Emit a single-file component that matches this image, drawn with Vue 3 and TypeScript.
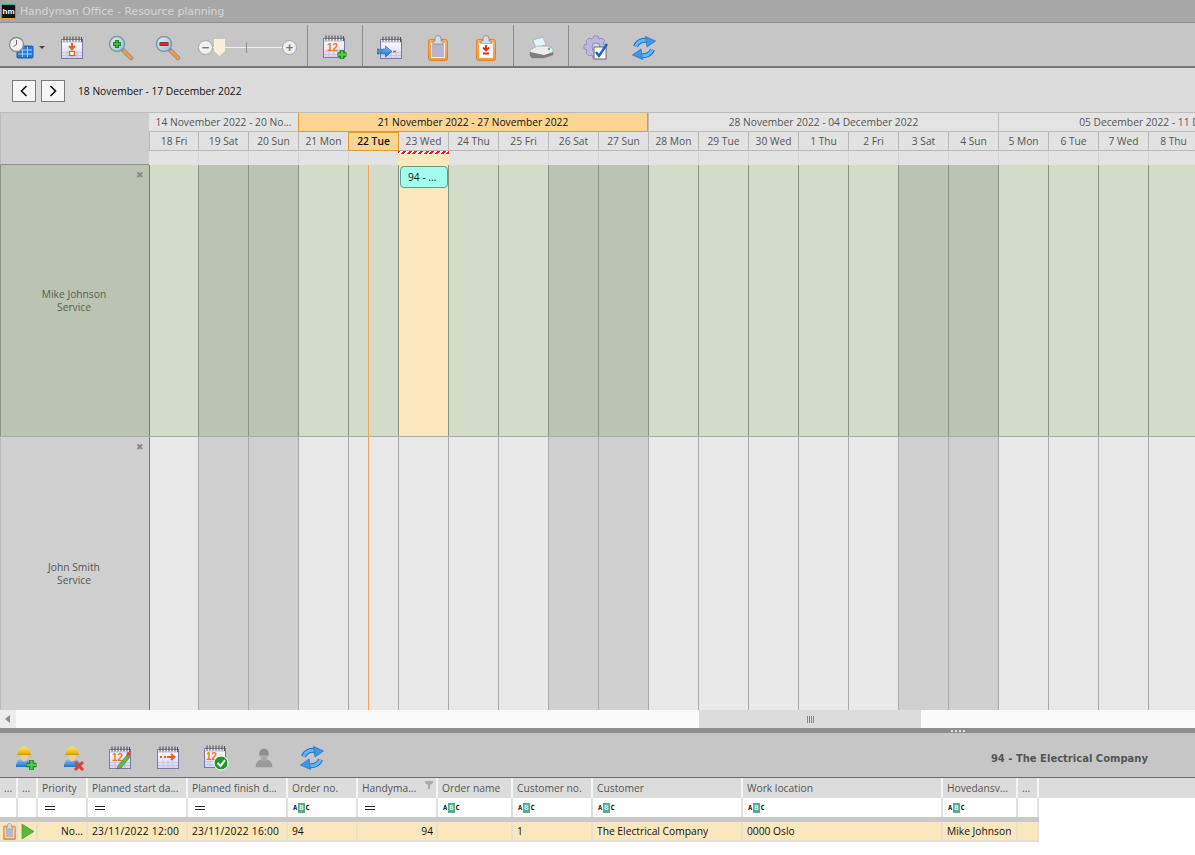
<script setup lang="ts">
interface Day { label: string; weekend: boolean; today?: boolean; active?: boolean }
interface Column { title: string; width: number; filter: '' | 'eq' | 'abc'; value: string; right?: boolean; sort?: boolean; date?: boolean }

const weeks = [
  { label: '14 November 2022 - 20 No...', days: 3 },
  { label: '21 November 2022 - 27 November 2022', days: 7, selected: true },
  { label: '28 November 2022 - 04 December 2022', days: 7 },
  { label: '05 December 2022 - 11 December 2022', days: 7 }
]

const names = ['Mon', 'Tue', 'Wed', 'Thu', 'Fri', 'Sat', 'Sun']
const days: Day[] = []
const addDays = (from: number, to: number, startIdx: number) => {
  for (let d = from; d <= to; d++) {
    const idx = (startIdx + d - from) % 7
    days.push({
      label: `${d} ${names[idx]}`,
      weekend: idx > 4,
      today: d === 22,
      active: d === 23
    })
  }
}
addDays(18, 30, 4)
addDays(1, 8, 3)

const resources = [
  { name: 'Mike Johnson', team: 'Service', green: true },
  { name: 'John Smith', team: 'Service', green: false }
]

const columns: Column[] = [
  { title: '...', width: 18, filter: '', value: '' },
  { title: '...', width: 20, filter: '', value: '' },
  { title: 'Priority', width: 50, filter: 'eq', value: 'No...', right: true },
  { title: 'Planned start da...', width: 100, filter: 'eq', value: '23/11/2022 12:00', date: true },
  { title: 'Planned finish d...', width: 100, filter: 'eq', value: '23/11/2022 16:00', date: true },
  { title: 'Order no.', width: 70, filter: 'abc', value: '94' },
  { title: 'Handyma...', width: 80, filter: 'eq', value: '94', right: true, sort: true },
  { title: 'Order name', width: 75, filter: 'abc', value: '' },
  { title: 'Customer no.', width: 80, filter: 'abc', value: '1' },
  { title: 'Customer', width: 150, filter: 'abc', value: 'The Electrical Company' },
  { title: 'Work location', width: 200, filter: 'abc', value: '0000 Oslo' },
  { title: 'Hovedansv...', width: 75, filter: 'abc', value: 'Mike Johnson' },
  { title: '...', width: 21, filter: '', value: '' }
]
</script>

<template>
  <div class="app">
    <svg width="0" height="0" class="defs">
      <defs>
        <linearGradient id="page" x1="0" y1="0" x2="0" y2="1">
          <stop offset="0" stop-color="#ffffff" />
          <stop offset="1" stop-color="#d4d4f2" />
        </linearGradient>
        <linearGradient id="blue" x1="0" y1="0" x2="0" y2="1">
          <stop offset="0" stop-color="#7cc4f5" />
          <stop offset="1" stop-color="#1f6fd0" />
        </linearGradient>
        <linearGradient id="lens" x1="0" y1="0" x2="1" y2="1">
          <stop offset="0" stop-color="#e4f0f6" />
          <stop offset="1" stop-color="#98bdd0" />
        </linearGradient>
        <linearGradient id="orange" x1="0" y1="0" x2="0" y2="1">
          <stop offset="0" stop-color="#f6b266" />
          <stop offset="1" stop-color="#ef9a3a" />
        </linearGradient>
        <linearGradient id="hat" x1="0" y1="0" x2="0" y2="1">
          <stop offset="0" stop-color="#ffe25a" />
          <stop offset="1" stop-color="#eeb100" />
        </linearGradient>
        <symbol id="cal" viewBox="0 0 24 24">
          <rect x="1.500" y="3.500" width="21" height="19" fill="url(#page)" stroke="#7a7aa8" />
          <path d="M2 6h20" stroke="#b8b8d8" />
          <path d="M2 16.500h20M2 19.500h20M7 14v8M12 14v8M17 14v8" stroke="#c0c0e2" stroke-width=".8" />
          <path d="M4 .5v5M7 .5v5M10 .5v5M13 .5v5M16 .5v5M19 .5v5M21.500 1v5" stroke="#555" stroke-width="1.100" />
        </symbol>
        <symbol id="mag" viewBox="0 0 26 26">
          <path d="M14 14l9 9" stroke="#8a8a8a" stroke-width="4.500" stroke-linecap="round" />
          <path d="M16 16l7 7" stroke="#f09a45" stroke-width="3" stroke-linecap="round" />
          <circle cx="9" cy="9" r="7.500" fill="url(#lens)" stroke="#7f98a6" stroke-width="1.500" />
        </symbol>
        <symbol id="clip" viewBox="0 0 20 26">
          <rect x=".5" y="4.500" width="19" height="21" rx="2" fill="url(#orange)" stroke="#e08426" />
          <rect x="3.500" y="8.500" width="13" height="14" fill="#b6b6ca" stroke="#eeeef4" />
          <path d="M7 6V3.500a3 3 0 0 1 6 0V6h2v3H5V6z" fill="#dcdcdc" stroke="#858585" stroke-width=".8" />
        </symbol>
        <symbol id="worker" viewBox="0 0 24 24">
          <path d="M1 23c0-6 3-8.500 6-8.500h6c3 0 6 2.500 6 8.500z" fill="url(#blue)" />
          <path d="M6.500 9h7v4a3.500 3.500 0 0 1-7 0z" fill="#f5c896" />
          <path d="M3.500 8.500c0-5 2.500-8 6.500-8s6.500 3 6.500 8z" fill="url(#hat)" />
          <path d="M2.500 9h15" stroke="#d39800" stroke-width="1.500" />
        </symbol>
        <symbol id="sync" viewBox="0 0 24 24">
          <path d="M3.500 10.500C5 6 10 3.500 15 4.500M20.500 13.500C19 18 14 20.500 9 19.500" fill="none" stroke="#1f6fd0" stroke-width="5" />
          <path d="M3.500 10.500C5 6 10 3.500 15 4.500M20.500 13.500C19 18 14 20.500 9 19.500" fill="none" stroke="#62b8f2" stroke-width="3" />
          <path d="M13.500 .5L23.500 5 15 11z" fill="#3d97e6" stroke="#1f6fd0" stroke-width=".7" />
          <path d="M10.500 23.500L.5 19 9 13z" fill="#3d97e6" stroke="#1f6fd0" stroke-width=".7" />
        </symbol>
      </defs>
    </svg>

    <header class="titlebar">
      <span class="logo">hm</span>
      <span class="title">Handyman Office - Resource planning</span>
    </header>

    <div class="toolbar">
      <div class="group first">
        <button class="tool clock">
          <svg width="28" height="24" viewBox="0 0 28 24">
            <rect x="9" y="10" width="16" height="12" rx="1" fill="#2a78d8" stroke="#1c5bb0" />
            <path d="M10 14h14M10 18h14M14.500 11v10M19.500 11v10" stroke="#9fd0fa" />
            <circle cx="8.500" cy="8.500" r="7" fill="#f0f0f0" stroke="#8a8a8a" stroke-width="1.300" />
            <path d="M8.500 4v4.500l-3 2" fill="none" stroke="#666" />
          </svg>
          <i class="caret"></i>
        </button>
        <button class="tool w48">
          <svg width="24" height="24">
            <use href="#cal" />
            <path d="M12 7v5M9 10l3 3 3-3" fill="none" stroke="#f15a22" stroke-width="2" />
            <rect x="9.500" y="15.500" width="5" height="4" fill="#fff" stroke="#f15a22" stroke-width="1.300" />
          </svg>
        </button>
        <button class="tool w49">
          <svg width="26" height="26">
            <use href="#mag" />
            <path d="M5 9h8M9 5v8" stroke="#0a5c10" stroke-width="3.600" />
            <path d="M5.500 9h7M9 5.500v7" stroke="#3cc040" stroke-width="1.800" />
          </svg>
        </button>
        <button class="tool w45">
          <svg width="26" height="26">
            <use href="#mag" />
            <path d="M4.500 9h9" stroke="#7a0c06" stroke-width="3.600" />
            <path d="M5 9h8" stroke="#d92a20" stroke-width="2" />
          </svg>
        </button>
        <div class="slider">
          <span class="round">−</span>
          <div class="track"><i class="tick"></i><i class="thumb"></i></div>
          <span class="round">+</span>
        </div>
      </div>
      <div class="group g54">
        <button class="tool w54">
          <svg width="26" height="26" viewBox="0 0 26 26">
            <use href="#cal" width="24" height="24" />
            <text x="5" y="16" class="cal-num">12</text>
            <path d="M20 15v9M15.500 19.500h9" stroke="#0a7a14" stroke-width="4.500" />
            <path d="M20 15.500v8M16 19.500h8" stroke="#50d040" stroke-width="2.500" />
          </svg>
        </button>
      </div>
      <div class="group g150">
        <button class="tool w48">
          <svg width="26" height="24" viewBox="0 0 26 24">
            <use href="#cal" x="2" width="24" height="24" />
            <path d="M0 13h2v5H0zM3 13h1.500v5H3zM5.500 13h3V10l6.500 5.500L8.500 21v-3h-3z" fill="url(#blue)" stroke="#1c5bb0" stroke-width=".6" />
            <path d="M16 15.500h3" stroke="#f15a22" stroke-width="1.500" />
          </svg>
        </button>
        <button class="tool w48">
          <svg width="20" height="26"><use href="#clip" /></svg>
        </button>
        <button class="tool w48">
          <svg width="20" height="26">
            <use href="#clip" />
            <rect x="4" y="9" width="12" height="13" fill="#fff" />
            <path d="M10 10v5M7 12.500l3 3 3-3" fill="none" stroke="#e02a18" stroke-width="1.800" />
            <path d="M7 18.500h6" stroke="#e02a18" stroke-width="2" />
          </svg>
        </button>
      </div>
      <div class="group g54">
        <button class="tool w54">
          <svg width="26" height="24" viewBox="0 0 26 24">
            <path d="M5 4l10-3 3 8-10 3z" fill="#e4f4fc" stroke="#8fb2c6" stroke-width=".7" />
            <path d="M2 14l7-4h11l5 3v6l-9 3H4l-2-2z" fill="#ececec" stroke="#a0a0a0" stroke-width=".7" />
            <path d="M2 16l14 3 9-3v3l-9 3H4l-2-2z" fill="#7d7d7d" />
            <circle cx="21" cy="13" r="1.200" fill="#58c060" />
          </svg>
        </button>
      </div>
      <div class="group last">
        <button class="tool w48">
          <svg width="26" height="26" viewBox="0 0 26 26">
            <path d="M11 1h4l1 3 3-1 3 3-2 3 3 1v4l-3 1 1 3-3 3-3-1-1 3h-4l-1-3-3 1-3-3 1-3-3-1v-4l3-1-1-3 3-3 3 1z" fill="#b9b9dc" stroke="#8787b0" stroke-width=".8" />
            <circle cx="13" cy="12" r="4" fill="#d8d8ee" stroke="#8787b0" />
            <rect x="11" y="12" width="12" height="12" fill="#fff" stroke="#667" />
            <path d="M13 17l3 4 8-12" fill="none" stroke="#1c60c8" stroke-width="2.400" />
          </svg>
        </button>
        <button class="tool w48">
          <svg width="24" height="24"><use href="#sync" /></svg>
        </button>
      </div>
    </div>

    <nav class="datebar">
      <button class="nav">
        <svg width="8" height="12" viewBox="0 0 8 12"><path d="M6.500 1l-5 5 5 5" fill="none" stroke="#111" stroke-width="1.600" /></svg>
      </button>
      <button class="nav">
        <svg width="8" height="12" viewBox="0 0 8 12"><path d="M1.500 1l5 5-5 5" fill="none" stroke="#111" stroke-width="1.600" /></svg>
      </button>
      <span class="range">18 November - 17 December 2022</span>
    </nav>

    <section class="scheduler">
      <div class="sch-head">
        <div class="corner"></div>
        <div class="timeline-head">
          <div class="weeks">
            <div
              v-for="w in weeks"
              :key="w.label"
              class="week"
              :class="{ selected: w.selected }"
              :style="{ width: w.days * 50 + 'px' }"
            >{{ w.label }}</div>
          </div>
          <div class="day-row">
            <div v-for="d in days" :key="d.label" class="day" :class="{ today: d.today }">{{ d.label }}</div>
          </div>
          <div class="blank-row">
            <div v-for="d in days" :key="d.label" class="blank" :class="{ hatch: d.active }"></div>
          </div>
        </div>
      </div>

      <div class="sch-body">
        <div v-for="r in resources" :key="r.name" class="res" :class="{ green: r.green }">
          <div class="res-label">
            <span class="close">✖</span>
            <span>{{ r.name }}</span>
            <span>{{ r.team }}</span>
          </div>
          <div class="cells">
            <div
              v-for="d in days"
              :key="d.label"
              class="cell"
              :class="{ weekend: d.weekend, active: d.active && r.green }"
            >
              <div v-if="d.active && r.green" class="event">94 - ...</div>
            </div>
          </div>
        </div>
        <i class="now"></i>
      </div>
    </section>

    <div class="hscroll">
      <span class="arrow"></span>
      <div class="thumbbar"><i class="grip"></i></div>
    </div>
    <div class="splitter"><i></i><i></i><i></i><i></i></div>

    <div class="toolbar2">
      <button class="tool w48">
        <svg width="28" height="28" viewBox="0 0 28 28">
          <use href="#worker" x="5" y="2" width="22" height="22" />
          <path d="M21.500 16v10M16.500 21h10" stroke="#0a7a14" stroke-width="4.500" />
          <path d="M21.500 16.500v9M17 21h9" stroke="#50d040" stroke-width="2.500" />
        </svg>
      </button>
      <button class="tool w48">
        <svg width="28" height="28" viewBox="0 0 28 28">
          <use href="#worker" x="5" y="2" width="22" height="22" />
          <path d="M17 18l8 8M25 18l-8 8" stroke="#e0402a" stroke-width="3" />
        </svg>
      </button>
      <button class="tool w48">
        <svg width="24" height="24">
          <use href="#cal" />
          <text x="4" y="15" class="cal-num">12</text>
          <path d="M10 20l9-11 3 2-9 11-4 1z" fill="#66b84a" stroke="#2f7a20" stroke-width=".6" />
          <circle cx="20.500" cy="8" r="2" fill="#e0402a" />
        </svg>
      </button>
      <button class="tool w48">
        <svg width="24" height="24">
          <use href="#cal" />
          <path d="M4 11h2M8 11h2" stroke="#f15a22" stroke-width="2" />
          <path d="M11 11h7M15 8l3.500 3-3.500 3" fill="none" stroke="#f15a22" stroke-width="2" />
        </svg>
      </button>
      <button class="tool w48">
        <svg width="26" height="26" viewBox="0 0 26 26">
          <use href="#cal" width="24" height="24" />
          <text x="3" y="15" class="cal-num">12</text>
          <circle cx="18" cy="18" r="7" fill="#1f9a2a" stroke="#fff" />
          <path d="M14.500 18l3 3 4.500-6" fill="none" stroke="#fff" stroke-width="2" />
        </svg>
      </button>
      <button class="tool w48">
        <svg width="20" height="24" viewBox="0 0 24 24">
          <path d="M2 23c0-7 4-9 7-9h6c3 0 7 2 7 9z" fill="#9a9a9a" />
          <path d="M8 9h8v4a4 4 0 0 1-8 0z" fill="#a8a8a8" />
          <path d="M6 9c0-5 2.500-8 6-8s6 3 6 8z" fill="#8e8e8e" />
        </svg>
      </button>
      <button class="tool w48">
        <svg width="24" height="24"><use href="#sync" /></svg>
      </button>
      <strong class="order-title">94 - The Electrical Company</strong>
    </div>

    <section class="grid">
      <div class="g-row g-header">
        <div v-for="(c, i) in columns" :key="i" class="g-cell" :style="{ width: c.width + 'px' }">
          <span class="clip">{{ c.title }}</span>
          <svg v-if="c.sort" class="funnel" width="8" height="8" viewBox="0 0 8 8"><path d="M0 0h8v2L5 4v4H3V4L0 2z" fill="#aaa" /></svg>
        </div>
      </div>
      <div class="g-row g-filter">
        <div v-for="(c, i) in columns" :key="i" class="g-cell" :style="{ width: c.width + 'px' }">
          <i v-if="c.filter === 'eq'" class="eq"></i>
          <span v-else-if="c.filter === 'abc'" class="abc">A<b>B</b>C</span>
        </div>
      </div>
      <div class="g-strip"></div>
      <div class="g-row g-data">
        <div
          v-for="(c, i) in columns"
          :key="i"
          class="g-cell"
          :class="{ right: c.right, date: c.date }"
          :style="{ width: c.width + 'px' }"
        >
          <svg v-if="i === 0" width="13" height="17" viewBox="0 0 20 26"><use href="#clip" /></svg>
          <svg v-else-if="i === 1" width="13" height="15" viewBox="0 0 13 15"><path d="M1 0l12 7.500L1 15z" fill="#5cb83c" stroke="#3d9628" stroke-width=".6" /></svg>
          <span v-else class="clip">{{ c.value }}</span>
        </div>
      </div>
    </section>
  </div>
</template>

<style>
html, body { margin: 0; padding: 0; background: #fff; }
</style>

<style scoped>
.app {
  width: 1195px;
  height: 855px;
  overflow: hidden;
  display: flex;
  flex-direction: column;
  font-family: "Open Sans", "Liberation Sans", sans-serif;
  font-size: 10.25px;
  color: #111;
  background: #fff;
}
.defs { position: absolute; }
button { margin: 0; padding: 0; border: 0; background: none; font: inherit; }

.titlebar {
  height: 23px;
  flex: none;
  box-sizing: border-box;
  background: #a7a7a7;
  border-bottom: 1px solid #8f8f8f;
  display: flex;
  align-items: center;
  padding-left: 1px;
  gap: 4px;
}
.logo {
  width: 15px;
  height: 15px;
  box-sizing: border-box;
  border-radius: 2px;
  background: #111;
  border: 1px solid #3aa;
  border-bottom-color: #e5a92c;
  color: #fff;
  font: bold 8px "Liberation Sans", sans-serif;
  display: flex;
  align-items: center;
  justify-content: center;
}
.title { color: #d6d6d6; font: 10.8px "DejaVu Sans", sans-serif; }

.toolbar {
  height: 45px;
  flex: none;
  box-sizing: border-box;
  display: flex;
  background: #c6c6c6;
  border-bottom: 2px solid #767676;
}
.group {
  height: 41px;
  margin-top: 2px;
  display: flex;
  align-items: center;
  border-right: 1px solid #8c8c8c;
  box-sizing: border-box;
  padding-top: 4px;
}
.group.first { width: 308px; padding-left: 6px; }
.g54 { width: 55px; }
.g150 { width: 151px; padding-left: 3px; }
.group.last { border-right: 0; padding-left: 3px; }
.tool { display: flex; align-items: center; justify-content: center; flex: none; height: 37px; }
.w45 { width: 45px; }
.w48 { width: 48px; }
.w49 { width: 49px; }
.w54 { width: 54px; }
.clock { width: 42px; justify-content: flex-start; padding-left: 2px; gap: 2px; box-sizing: border-box; }
.caret { border: 3px solid transparent; border-top: 3px solid #444; border-bottom: 0; margin-left: 1px; }
.cal-num { font: bold 10px "Liberation Sans", sans-serif; fill: #f07820; }

.slider { display: flex; align-items: center; margin-left: 8px; width: 99px; }
.round {
  width: 15px;
  height: 15px;
  box-sizing: border-box;
  border-radius: 50%;
  background: #efefef;
  border: 1px solid #a4a4a4;
  display: flex;
  align-items: center;
  justify-content: center;
  color: #777;
  font: bold 13px/1 "Liberation Sans", sans-serif;
  flex: none;
}
.track { flex: 1; height: 1px; background: #f0f0f0; position: relative; }
.tick { position: absolute; left: 33px; top: -5px; width: 1px; height: 11px; background: #8d8d8d; }
.thumb {
  position: absolute;
  left: 1px;
  top: -8px;
  width: 11px;
  height: 17px;
  background: #f8f0d8;
  clip-path: polygon(0 0, 100% 0, 100% 70%, 50% 100%, 0 70%);
}

.datebar {
  height: 44px;
  flex: none;
  box-sizing: border-box;
  background: #dcdcdc;
  display: flex;
  align-items: center;
  padding: 1px 0 0 12px;
  gap: 5px;
}
.nav {
  width: 24px;
  height: 22px;
  box-sizing: border-box;
  background: #f6f6f6;
  border: 1px solid #7b7b7b;
  display: flex;
  align-items: center;
  justify-content: center;
}
.range { margin-left: 8px; }

.scheduler { flex: none; }
.sch-head { display: flex; height: 53px; border-top: 1px solid #bbb; box-sizing: border-box; background: #dcdcdc; }
.corner { width: 149px; flex: none; background: #cdcdcd; border-left: 1px solid #bbb; box-sizing: border-box; border-bottom: 1px solid #8b9384; }
.timeline-head { flex: 1; min-width: 0; overflow: hidden; }
.weeks, .day-row, .blank-row { display: flex; width: 1100px; }
.weeks { margin-left: -1px; }
.week {
  height: 19px;
  flex: none;
  box-sizing: border-box;
  background: #e4e4e4;
  border-left: 1px solid #bcbcbc;
  border-bottom: 1px solid #bcbcbc;
  color: #555;
  text-align: center;
  line-height: 18px;
  white-space: nowrap;
  overflow: hidden;
}
.week.selected { background: #fdd593; border: 1px solid #e09b2e; border-top: 0; color: #111; }
.day {
  width: 50px;
  height: 19px;
  flex: none;
  box-sizing: border-box;
  background: #e2e2e2;
  border-right: 1px solid #b8b8b8;
  border-bottom: 1px solid #b8b8b8;
  color: #555;
  text-align: center;
  line-height: 18px;
}
.day:first-child { border-left: 1px solid #b8b8b8; }
.day.today {
  background: #fdd593;
  border: 1px solid #e09b2e;
  color: #111;
  font-weight: 600;
  margin-left: -1px;
  width: 51px;
  line-height: 16px;
}
.blank { width: 50px; height: 14px; flex: none; box-sizing: border-box; background: #e3e3e3; border-right: 1px solid #d4d4d4; }
.blank.hatch {
  margin-left: -1px;
  width: 51px;
  background:
    repeating-linear-gradient(135deg, #ff1030 0 2px, #fff 2px 4px) top / 100% 3px no-repeat,
    #fbe9bd;
  border-right: 0;
}

.sch-body { position: relative; }
.res { display: flex; height: 272px; overflow: hidden; border-bottom: 1px solid #a9a9a9; box-sizing: border-box; }
.res + .res { height: 273px; border-bottom: 0; }
.res-label {
  width: 149px;
  flex: none;
  box-sizing: border-box;
  background: #d0d0d0;
  border-left: 1px solid #bbb;
  position: relative;
  display: flex;
  flex-direction: column;
  align-items: center;
  justify-content: center;
  color: #555;
  line-height: 13px;
  padding-right: 2px;
}
.green .res-label { background: #bbc4b2; color: #555e50; border-left-color: #8b9384; }
.close { position: absolute; right: 5px; top: 3px; font-size: 9px; color: #8a8a8a; }
.cells { display: flex; width: 1100px; flex: none; }
.cell {
  width: 50px;
  flex: none;
  box-sizing: border-box;
  background: #e9e9e9;
  border-right: 1px solid #a9a9a9;
  position: relative;
}
.cell:first-child { border-left: 1px solid #777; }
.cell.weekend { background: #d0d0d0; }
.green .cell { background: #d3dcc8; border-right-color: #8b9384; }
.green .cell.weekend { background: #bbc4b2; }
.green .cell.active { background: #fbe9bd; }
.event {
  position: absolute;
  left: 1px;
  top: 1px;
  width: 48px;
  height: 22px;
  box-sizing: border-box;
  background: #a3ffed;
  border: 1px solid #5f9c8c;
  border-radius: 4px;
  padding-left: 7px;
  line-height: 20px;
}
.now { position: absolute; left: 368px; top: 0; bottom: 0; width: 1px; background: #f5a35c; }

.hscroll { height: 18px; flex: none; background: #fafafa; display: flex; position: relative; }
.arrow { width: 16px; background: #ececec; position: relative; }
.arrow::after {
  content: "";
  position: absolute;
  left: 5px;
  top: 5px;
  border: 4px solid transparent;
  border-left: 0;
  border-right: 5px solid #8d8d8d;
}
.thumbbar { margin-left: 683px; width: 222px; background: #dcdcdc; display: flex; align-items: center; justify-content: center; }
.grip { width: 7px; height: 7px; background: repeating-linear-gradient(90deg, #888 0 1px, transparent 1px 2px); }

.splitter {
  height: 5px;
  flex: none;
  background: #8e8e8e;
  display: flex;
  align-items: center;
  justify-content: flex-end;
  gap: 2px;
  padding-right: 230px;
}
.splitter i { width: 2px; height: 2px; background: #e0e0e0; }

.toolbar2 {
  height: 45px;
  flex: none;
  box-sizing: border-box;
  background: #c6c6c6;
  border-bottom: 1px solid #6f6f6f;
  display: flex;
  align-items: center;
  padding-top: 6px;
}
.toolbar2 .tool { height: 38px; }
.order-title { margin-left: auto; margin-right: 47px; color: #555; font: bold 10px "DejaVu Sans", sans-serif; }

.grid { flex: 1; }
.g-row { display: flex; }
.g-cell {
  flex: none;
  box-sizing: border-box;
  display: flex;
  align-items: center;
  position: relative;
  border-right: 2px solid #e4e4e4;
  padding: 0 2px 0 4px;
  overflow: hidden;
}
.clip { white-space: nowrap; overflow: hidden; }
.g-header { height: 20px; background: #dcdcdc; color: #555; }
.g-header .g-cell { border-right-color: #f4f4f4; }
.g-filter { height: 19px; }
.g-filter .g-cell { border-right-color: #e0e0e0; padding-left: 5px; }
.g-strip { height: 5px; width: 1039px; background: #c9c9c9; }
.g-data { height: 20px; width: 1039px; background: #fae7bd; border-bottom: 2px solid #e4e0d6; box-sizing: border-box; }
.g-data .g-cell { padding: 0 3px 0 4px; border-right-color: #e6e0d0; }
.g-data .g-cell:nth-child(-n+2) { padding: 0 0 0 3px; }
.g-cell.right { justify-content: flex-end; }
.g-cell.date { letter-spacing: .25px; }
.funnel { position: absolute; right: 3px; top: 3px; }
.eq { width: 10px; height: 1px; border-top: 1px solid #222; border-bottom: 1px solid #222; padding-top: 1px; margin-left: 2px; box-sizing: content-box; }
.abc { font: bold 7px/10px "DejaVu Sans Mono", monospace; color: #111; display: flex; }
.abc b { background: #4fae8f; color: #e4f6f0; padding: 0 1.5px; margin: 0 .5px; }
</style>
